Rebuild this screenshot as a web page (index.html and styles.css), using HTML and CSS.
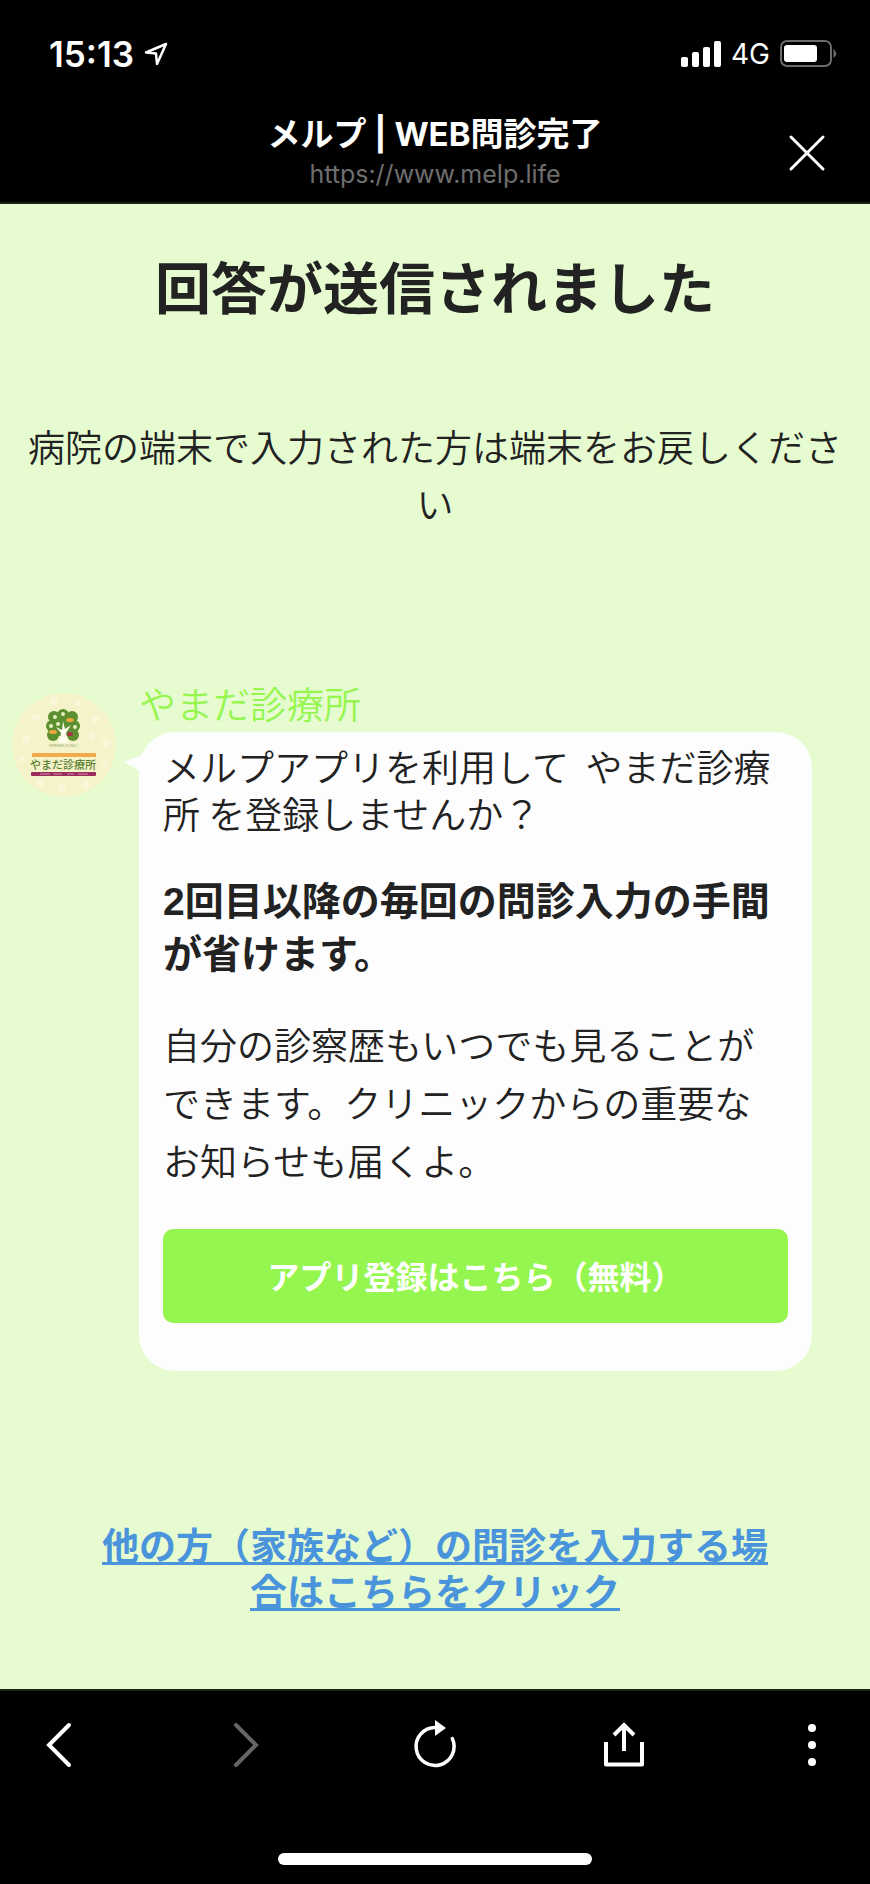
FILE: index.html
```html
<!DOCTYPE html>
<html lang="ja">
<head>
    <meta charset="UTF-8">
    <meta name="viewport" content="width=device-width, initial-scale=1.0">
    <title>メルプ | WEB問診完了</title>
    <link rel="stylesheet" href="styles.css">
</head>
<body>
    <header class="header">
        <div class="status-bar">
            <div class="status-left">
                <span class="time">15:13</span>
                <svg width="24" height="24" viewBox="0 0 24 24" fill="none" stroke="#fff" stroke-width="2.500" stroke-linejoin="round">
                    <path d="M22 2 L2 10.500 L12 11.500 L13 22 Z"/>
                </svg>
            </div>
            <div class="status-right">
                <svg width="40" height="26" viewBox="0 0 40 26" fill="#fff">
                    <rect x="0" y="16" width="7" height="10" rx="2"/>
                    <rect x="11" y="11" width="7" height="15" rx="2"/>
                    <rect x="22" y="6" width="7" height="20" rx="2"/>
                    <rect x="33" y="0" width="7" height="26" rx="2"/>
                </svg>
                <span class="network">4G</span>
                <svg width="57" height="27" viewBox="0 0 57 27">
                    <rect x="1" y="1" width="50" height="25" rx="6" fill="none" stroke="#6b6b6b" stroke-width="2"/>
                    <rect x="4" y="5" width="33" height="17" rx="3" fill="#fff"/>
                    <path d="M53.500 9 Q59 13.500 53.500 18 Z" fill="#6b6b6b"/>
                </svg>
            </div>
        </div>
        <div class="title-bar">
            <div class="title-text">
                <div class="title">メルプ | WEB問診完了</div>
                <div class="url">https://www.melp.life</div>
            </div>
            <button class="icon-button close-button" aria-label="閉じる">
                <svg width="36" height="36" viewBox="0 0 36 36" fill="none" stroke="#fff" stroke-width="3" stroke-linecap="round">
                    <path d="M2 2 L34 34 M34 2 L2 34"/>
                </svg>
            </button>
        </div>
    </header>

    <main class="content">
        <h1>回答が送信されました</h1>
        <p class="notice">病院の端末で入力された方は端末をお戻しください</p>

        <section class="chat">
            <svg class="avatar" viewBox="0 0 104 104">
                <circle cx="52" cy="52" r="52" fill="#f5f3c9"/>
                <g fill="#f9f7d8">
                    <circle cx="14" cy="46" r="4"/>
                    <circle cx="24" cy="24" r="4"/>
                    <circle cx="42" cy="8" r="4"/>
                    <circle cx="66" cy="10" r="3"/>
                    <circle cx="83" cy="26" r="4"/>
                    <circle cx="94" cy="50" r="4"/>
                    <circle cx="80" cy="43" r="3"/>
                    <circle cx="10" cy="66" r="3"/>
                    <circle cx="28" cy="90" r="4"/>
                    <circle cx="50" cy="95" r="4"/>
                    <circle cx="74" cy="92" r="4"/>
                    <circle cx="93" cy="72" r="3"/>
                </g>
                <g fill="#5b8f2f">
                    <circle cx="51" cy="22" r="6"/>
                    <circle cx="42" cy="24" r="6"/>
                    <circle cx="60" cy="24" r="6"/>
                    <circle cx="40" cy="33" r="6"/>
                    <circle cx="62" cy="33" r="6"/>
                    <circle cx="41" cy="42" r="6"/>
                    <circle cx="61" cy="42" r="6"/>
                    <rect x="42" y="23" width="18" height="20"/>
                </g>
                <g fill="#e9edc4">
                    <circle cx="43" cy="24" r="2"/>
                    <circle cx="51" cy="21" r="2"/>
                    <circle cx="39" cy="33" r="2"/>
                    <circle cx="63" cy="34" r="2"/>
                    <circle cx="46" cy="31" r="2"/>
                </g>
                <path d="M47 50 L49 40 L44 34 L50 37 L51 28 L53 36 L59 32 L54 40 L56 50 Z" fill="#fffdf0"/>
                <ellipse cx="58" cy="27" rx="4" ry="2" fill="#f0a63c"/>
                <ellipse cx="41" cy="39" rx="4" ry="2" fill="#f0a63c"/>
                <ellipse cx="58" cy="41" rx="3" ry="2" fill="#a8324b"/>
                <text class="logo-roman" x="51" y="54" text-anchor="middle">YAMADA CLINIC</text>
                <rect x="20" y="60" width="64" height="4" fill="#f3aa4c"/>
                <text class="logo-name" x="51" y="76" text-anchor="middle">やまだ診療所</text>
                <rect x="19" y="79" width="65" height="4" rx="1" fill="#9c2c5c"/>
                <path d="M28 81 H38 M41 81 H50 M55 81 H62 M66 81 H76" stroke="#c98aa6" stroke-width="1"/>
            </svg>
            <div class="chat-body">
                <div class="clinic-name">やまだ診療所</div>
                <div class="bubble">
                    <p class="message">メルプアプリを利用して&nbsp; やまだ診療所 を登録しませんか？</p>
                    <p class="strong-message">2回目以降の毎回の問診入力の手間が省けます。</p>
                    <p class="detail">自分の診察歴もいつでも見ることができます。クリニックからの重要なお知らせも届くよ。</p>
                    <button class="register-button">アプリ登録はこちら（無料）</button>
                </div>
            </div>
        </section>

        <a class="other-link" href="#">他の方（家族など）の問診を入力する場合はこちらをクリック</a>
    </main>

    <footer class="footer">
        <nav class="toolbar">
            <button class="icon-button" aria-label="戻る">
                <svg width="48" height="48" viewBox="0 0 48 48" fill="none" stroke="#fff" stroke-width="4" stroke-linecap="round">
                    <path d="M35 4 L15 24 L35 44"/>
                </svg>
            </button>
            <button class="icon-button" aria-label="進む" disabled>
                <svg width="48" height="48" viewBox="0 0 48 48" fill="none" stroke="#666" stroke-width="4" stroke-linecap="round">
                    <path d="M13 4 L33 24 L13 44"/>
                </svg>
            </button>
            <button class="icon-button" aria-label="再読み込み">
                <svg width="48" height="48" viewBox="0 0 48 48" fill="none" stroke="#fff" stroke-width="3.500" stroke-linecap="round">
                    <path d="M41.300 17.500 A19 19 0 1 1 24 6.500"/>
                    <path d="M24 -1 L35 7 L24 15 Z" fill="#fff" stroke="none"/>
                </svg>
            </button>
            <button class="icon-button" aria-label="共有">
                <svg width="48" height="48" viewBox="0 0 48 48" fill="none" stroke="#fff" stroke-width="4">
                    <path d="M6 21 V43.500 H42 V21" stroke-linejoin="round"/>
                    <path d="M24 30 V5"/>
                    <path d="M14 14 L24 4 L34 14"/>
                </svg>
            </button>
            <button class="icon-button" aria-label="メニュー">
                <svg width="48" height="48" viewBox="0 0 48 48" fill="#fff">
                    <circle cx="24" cy="7" r="4"/>
                    <circle cx="24" cy="24" r="4"/>
                    <circle cx="24" cy="41" r="4"/>
                </svg>
            </button>
        </nav>
        <div class="home-indicator"></div>
    </footer>
</body>
</html>
```

FILE: styles.css
```css
* {
    box-sizing: border-box;
}
body {
    font-family: "Noto Sans CJK JP", sans-serif;
    font-weight: 350;
    display: flex;
    flex-direction: column;
    min-height: 100vh;
    margin: 0;
    background-color: #e6fcd0;
    color: #222;
}
h1, p {
    margin: 0;
}
button {
    font-family: inherit;
    border: none;
    cursor: pointer;
}
svg {
    display: block;
    overflow: visible;
}
.icon-button {
    padding: 0;
    background: none;
}

/* header */
.header {
    background-color: #000;
    color: #fff;
    padding-bottom: 14px;
    border-bottom: 2px solid #1c2118;
}
.status-bar {
    display: flex;
    justify-content: space-between;
    align-items: center;
    height: 107px;
    padding: 0 33px 0 49px;
}
.status-left, .status-right {
    display: flex;
    align-items: center;
    gap: 10px;
}
.time {
    font-family: Inter, sans-serif;
    font-size: 35px;
    font-weight: 600;
}
.network {
    font-family: Inter, sans-serif;
    font-size: 28px;
    font-weight: 400;
}
.title-bar {
    display: grid;
    grid-template-columns: 1fr auto 1fr;
    align-items: end;
    padding: 0 45px;
}
.title-text {
    grid-column: 2;
    text-align: center;
}
.title {
    font-family: Inter, "Noto Sans CJK JP", sans-serif;
    font-size: 33px;
    line-height: 54px;
    font-weight: 700;
}
.url {
    font-family: Inter, sans-serif;
    font-size: 25px;
    line-height: 27px;
    font-weight: 400;
    color: #6e6e6e;
}
.close-button {
    justify-self: end;
    margin-bottom: 17px;
}

/* page content */
.content {
    flex: 1;
    display: flex;
    flex-direction: column;
}
h1 {
    margin-top: 41px;
    font-size: 56px;
    line-height: 80px;
    text-align: center;
}
.notice {
    margin-top: 93px;
    padding: 0 24px;
    font-size: 37px;
    line-height: 57px;
    text-align: center;
}
.chat {
    display: flex;
    gap: 23px;
    margin-top: 145px;
    padding: 0 58px 0 12px;
}
.avatar {
    flex: none;
    width: 104px;
    height: 104px;
    margin-top: 16px;
}
.logo-roman {
    font-size: 4px;
    fill: #7c9a55;
}
.logo-name {
    font-size: 11px;
    font-weight: 500;
    fill: #5b8232;
}
.chat-body {
    flex: 1;
}
.clinic-name {
    padding-bottom: 2px;
    font-size: 37px;
    line-height: 53px;
    color: #96f650;
}
.bubble {
    position: relative;
    padding: 11px 24px 48px;
    border-radius: 36px;
    background-color: #fdfdfd;
}
/* tail of the speech bubble */
.bubble::before {
    content: "";
    position: absolute;
    top: 20px;
    left: -15px;
    border-top: 10px solid transparent;
    border-bottom: 14px solid transparent;
    border-right: 24px solid #fdfdfd;
}
.message {
    font-size: 37px;
    line-height: 47px;
}
.strong-message {
    margin-top: 38px;
    font-family: "Liberation Sans", "Noto Sans CJK JP", sans-serif;
    font-size: 39px;
    line-height: 53px;
    font-weight: 700;
}
.detail {
    margin-top: 34px;
    font-size: 37px;
    line-height: 58px;
}
.register-button {
    width: 100%;
    height: 94px;
    margin-top: 40px;
    padding-bottom: 4px;
    border-radius: 10px;
    background-color: #96f650;
    color: #fff;
    font-size: 32px;
    font-weight: 700;
}
.other-link {
    margin-top: 150px;
    padding: 0 100px;
    font-size: 37px;
    line-height: 46px;
    font-weight: 700;
    text-align: center;
    color: #4a94dc;
}

/* browser footer */
.footer {
    background-color: #000;
    border-top: 2px solid #1c2118;
    padding-bottom: 19px;
}
.toolbar {
    display: flex;
    justify-content: space-between;
    padding: 30px 34px 84px;
}
.home-indicator {
    width: 36%;
    height: 12px;
    margin: 0 auto;
    border-radius: 6px;
    background-color: #fff;
}
```
